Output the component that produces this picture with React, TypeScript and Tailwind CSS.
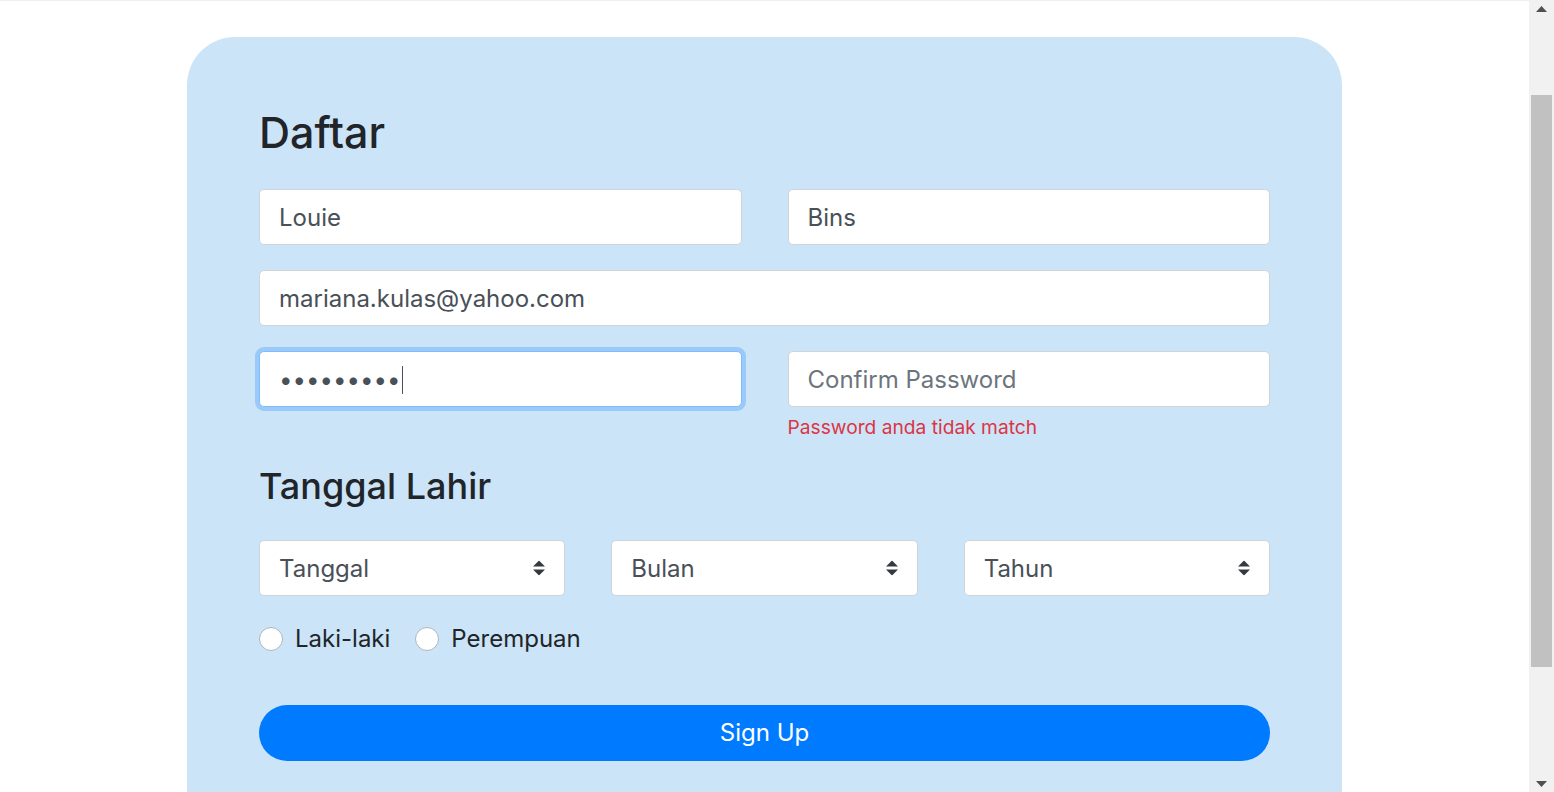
import React, { useEffect } from "react";

const font = { fontFamily: "Inter, 'Noto Sans', sans-serif" };

function SelectArrow() {
  return (
    <svg width="12" height="15" viewBox="0 0 4 5" className="absolute right-[19px] top-1/2 -translate-y-1/2">
      <path fill="#343a40" d="M2 0L0 2h4zm0 5L0 3h4z" />
    </svg>
  );
}

function Select({ label }: { label: string }) {
  return (
    <div className="relative flex h-[56px] items-center rounded-[5px] border border-[#ced4da] bg-white px-[19px] pt-[2px] text-[24px] text-[#495057]">
      {label}
      <SelectArrow />
    </div>
  );
}

function FakeScrollbar() {
  return (
    <div className="fixed right-0 top-0 flex h-screen w-[25px] flex-col items-center bg-[#f1f1f1]">
      <div className="flex h-[17px] w-full items-center justify-center">
        <svg width="11" height="6" viewBox="0 0 11 6">
          <path d="M5.5 0L11 6H0z" fill="#505050" />
        </svg>
      </div>
      <div className="mt-[78px] h-[572px] w-[21px] bg-[#c1c1c1]" />
      <div className="flex-1" />
      <div className="flex h-[17px] w-full items-center justify-center">
        <svg width="11" height="6" viewBox="0 0 11 6">
          <path d="M0 0h11L5.5 6z" fill="#505050" />
        </svg>
      </div>
    </div>
  );
}

const inputCls =
  "block h-[56px] w-full rounded-[5px] border border-[#ced4da] bg-white px-[19px] pt-[2px] text-[24px] text-[#495057] outline-none placeholder:text-[#6c757d]";

export default function App() {
  useEffect(() => {
    window.scrollTo(0, 108);
  }, []);

  return (
    <div className="min-h-screen bg-white" style={font}>
      <div className="w-[1529px]">
        <div className="h-[109px] border-b border-[#f0f0f0]" />
        <div className="mx-auto mt-[36px] mb-[36px] w-[1155px] rounded-[48px] bg-[#cce4f7] px-[72px] pt-[70px] pb-[144px]">
          <h1 className="text-[43px] font-medium leading-[1.2] text-[#212529]">Daftar</h1>
          <div className="mt-[30px] grid grid-cols-2 gap-x-[46px]">
            <input readOnly value="Louie" className={inputCls} />
            <input readOnly value="Bins" className={inputCls} />
          </div>
          <input readOnly value="mariana.kulas@yahoo.com" className={"mt-[25px] " + inputCls} />
          <div className="mt-[25px] grid grid-cols-2 gap-x-[46px]">
            <div className="flex h-[56px] items-center rounded-[5px] border border-[#80bdff] bg-white px-[19px] pt-[2px] text-[24px] text-[#495057] shadow-[0_0_0_4px_rgba(0,123,255,0.25)]">
              <span>•••••••••</span>
              <span className="ml-[1px] inline-block h-[28px] w-px bg-[#495057]" />
            </div>
            <div>
              <input readOnly placeholder="Confirm Password" className={inputCls} />
              <p className="mt-[6px] text-[19.2px] leading-[1.5] text-[#dc3545]">Password anda tidak match</p>
            </div>
          </div>
          <h2 className="mt-[24px] text-[36px] font-medium leading-[1.2] text-[#212529]">Tanggal Lahir</h2>
          <div className="mt-[31px] grid grid-cols-3 gap-x-[46px]">
            <Select label="Tanggal" />
            <Select label="Bulan" />
            <Select label="Tahun" />
          </div>
          <div className="mt-[25px] flex items-center text-[24px] leading-[1.5] text-[#212529]">
            <label className="flex items-center">
              <span className="inline-block h-[24px] w-[24px] rounded-full border border-[#adb5bd] bg-white" />
              <span className="ml-[12px]">Laki-laki</span>
            </label>
            <label className="ml-[25px] flex items-center">
              <span className="inline-block h-[24px] w-[24px] rounded-full border border-[#adb5bd] bg-white" />
              <span className="ml-[12px]">Perempuan</span>
            </label>
          </div>
          <button className="mt-[48px] flex h-[56px] w-full items-center justify-center rounded-full bg-[#007bff] text-[24px] text-white">
            Sign Up
          </button>
        </div>
      </div>
      <FakeScrollbar />
    </div>
  );
}
